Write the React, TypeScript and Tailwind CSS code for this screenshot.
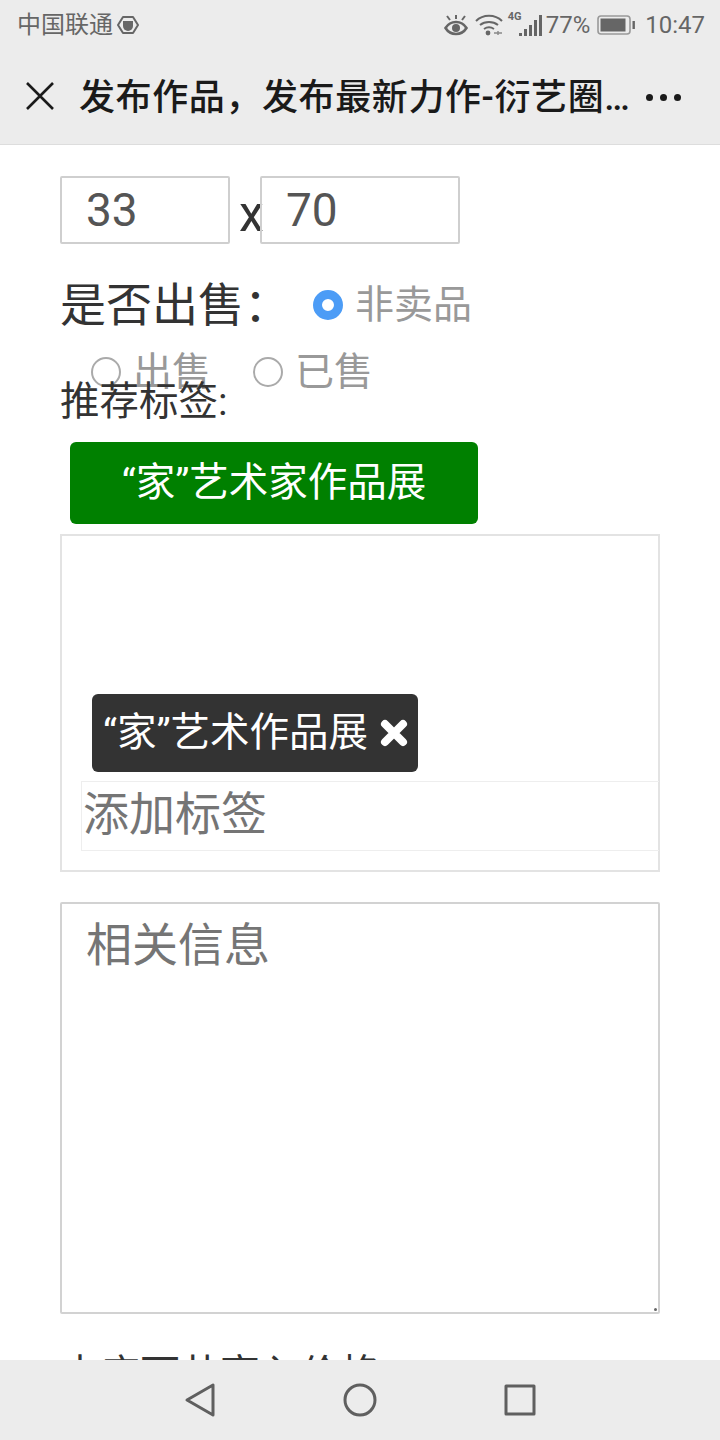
const cjk = 'font-["Roboto","Noto_Sans_CJK_SC",sans-serif]'

function StatusBar() {
  return (
    <div className="flex h-[50px] items-center justify-between pl-[17px] pr-[15px] text-[#666666]">
      <div className="flex items-center gap-[4px]">
        <span className="text-[24px] leading-[30px]">中国联通</span>
        <svg width="22" height="20" viewBox="0 0 22 20">
          <path d="M6 2h10l5 8-5 8H6l-5-8z" fill="none" stroke="#666" strokeWidth="2" strokeLinejoin="round" />
          <path d="M6 6h10v5a5 5 0 0 1-5 5 5 5 0 0 1-5-5z" fill="#666" />
        </svg>
      </div>
      <div className="flex items-center">
        <svg width="24" height="24" viewBox="0 0 24 24" fill="none" stroke="#666" strokeWidth="2.6">
          <path d="M1.5 15c2.500-4 6-6 10.500-6s8 2 10.500 6c-2.500 4-6 6-10.500 6s-8-2-10.500-6z" />
          <circle cx="12" cy="15" r="4" fill="#666" stroke="none" />
          <path d="M3 3l3 4M12 2v4M21 3l-3 4" strokeWidth="2" />
        </svg>
        <svg className="ml-[7px]" width="28" height="24" viewBox="0 0 28 24" fill="none" stroke="#666" strokeWidth="2">
          <path d="M1 8c7-7 19-7 26 0M5 12c5-4 13-4 18 0M9 16c3-2 7-2 10 0" />
          <circle cx="13" cy="20" r="2.400" fill="#666" stroke="none" />
          <path d="M19 20h8M23 18v4" strokeWidth="1.400" stroke="#888" />
        </svg>
        <div className="relative ml-[4px] h-[24px] w-[36px]">
          <span className="absolute left-[1px] top-[-2px] text-[11px] font-bold leading-[12px]">4G</span>
          <svg className="absolute right-0 top-0" width="24" height="24" viewBox="0 0 24 24" fill="#666">
            <rect x="0" y="20" width="3" height="3" />
            <rect x="5" y="16" width="3" height="7" />
            <rect x="10" y="12" width="3" height="11" />
            <rect x="15" y="7" width="3" height="16" />
            <rect x="20" y="2" width="3" height="21" />
          </svg>
        </div>
        <span className="ml-[3px] text-[24px] leading-[30px]">77%</span>
        <svg className="ml-[7px]" width="38" height="22" viewBox="0 0 38 22">
          <rect x="1" y="2" width="32" height="18" rx="3" fill="none" stroke="#999" strokeWidth="1.600" />
          <rect x="3.500" y="4.500" width="25" height="13" fill="#666" />
          <rect x="35.500" y="7" width="2.400" height="8" fill="#666" />
        </svg>
        <span className="ml-[10px] text-[24px] leading-[30px]">10:47</span>
      </div>
    </div>
  )
}

function TitleBar() {
  return (
    <div className="flex h-[95px] items-start border-b border-[#dddddd] pt-[23px] text-[#1a1a1a]">
      <svg className="ml-[25px] mt-[8px] shrink-0" width="30" height="30" viewBox="0 0 30 30" fill="none" stroke="#1a1a1a" strokeWidth="2.600">
        <path d="M2 2l26 26M28 2L2 28" />
      </svg>
      <div className="ml-[24px] w-[554px] truncate text-[36px] font-medium leading-[50px] tracking-[0.6px]">
        发布作品，发布最新力作-衍艺圈子发布作品
      </div>
      <div className="ml-[13px] mt-[21px] flex gap-[7px]">
        <span className="size-[7px] rounded-full bg-[#1a1a1a]" />
        <span className="size-[7px] rounded-full bg-[#1a1a1a]" />
        <span className="size-[7px] rounded-full bg-[#1a1a1a]" />
      </div>
    </div>
  )
}

function Radio({ label, checked }: { label: string; checked?: boolean }) {
  return (
    <div className="flex items-center gap-[12px]">
      <span
        className={
          checked
            ? 'size-[30px] rounded-full border-[9px] border-[#4c9cf6] bg-white'
            : 'size-[30px] rounded-full border-2 border-[#aaaaaa] bg-white'
        }
      />
      <span className="text-[39px] leading-[50px] text-[#999999]">{label}</span>
    </div>
  )
}

function SizeRow() {
  return (
    <div className="flex h-[68px] items-start">
      <div className="h-[68px] w-[170px] rounded-[2px] border-2 border-[#cfcfcf] pl-[24px] text-[46px] leading-[64px] text-[#555555]">
        33
      </div>
      <span className="ml-[9px] mt-[7px] w-[21px] text-[50px] leading-[62px] text-[#333333]">x</span>
      <div className="h-[68px] w-[200px] rounded-[2px] border-2 border-[#cfcfcf] pl-[24px] text-[46px] leading-[64px] text-[#555555]">
        70
      </div>
    </div>
  )
}

function TagBox() {
  return (
    <div className="flex h-[338px] w-[600px] flex-col items-start border-2 border-[#e3e3e3] pl-[19px]">
      <div className="ml-[11px] mt-[158px] flex h-[78px] w-[326px] items-center rounded-[6px] bg-[#333333] pl-[11px] text-white">
        <span className="whitespace-nowrap text-[39.5px] leading-[50px]">“家”艺术作品展</span>
        <svg className="ml-[12px] shrink-0" width="28" height="28" viewBox="0 0 28 28">
          <path d="M5 5l18 18M23 5L5 23" stroke="#fff" strokeWidth="8" strokeLinecap="round" />
        </svg>
      </div>
      <div className="mt-[9px] h-[70px] w-[578px] border border-r-0 border-[#eeeeee] pl-[1px] text-[46px] leading-[64px] text-[#757575]">
        添加标签
      </div>
    </div>
  )
}

function NavBar() {
  return (
    <div className="flex h-[80px] shrink-0 items-center justify-center gap-[120px] bg-[#ececec]">
      <svg width="60" height="40" viewBox="0 0 60 40" fill="none" stroke="#5f5f5f" strokeWidth="3" strokeLinejoin="round">
        <path d="M43 5v30L17 20z" />
      </svg>
      <svg className="mx-[-10px]" width="40" height="40" viewBox="0 0 40 40" fill="none" stroke="#5f5f5f" strokeWidth="3">
        <circle cx="20" cy="20" r="15" />
      </svg>
      <svg width="60" height="40" viewBox="0 0 60 40" fill="none" stroke="#5f5f5f" strokeWidth="3" strokeLinejoin="round">
        <rect x="16" y="6" width="28" height="28" />
      </svg>
    </div>
  )
}

export default function App() {
  return (
    <div className={`flex h-[1440px] w-[720px] flex-col overflow-hidden bg-white ${cjk}`}>
      <div className="shrink-0 bg-[#ececec]">
        <StatusBar />
        <TitleBar />
      </div>
      <div className="min-h-0 flex-1 overflow-hidden pl-[60px] pt-[31px]">
        <SizeRow />
        <div className="mt-[30px] flex h-[62px] items-center">
          <span className="w-[253px] text-[46px] leading-[62px] text-[#333333]">是否出售：</span>
          <Radio label="非卖品" checked />
        </div>
        <div className="mt-[11px] flex h-[50px] items-center gap-[42px] pl-[31px]">
          <Radio label="出售" />
          <Radio label="已售" />
        </div>
        <div className="mt-[-23px] text-[39.5px] leading-[56px] text-[#333333]">推荐标签:</div>
        <div className="ml-[10px] mt-[12px] flex h-[82px] w-[408px] items-center justify-center rounded-[6px] bg-[#008000] text-[39.5px] text-white">
          “家”艺术家作品展
        </div>
        <div className="mt-[10px]">
          <TagBox />
        </div>
        <div className="relative mt-[30px] h-[412px] w-[600px] rounded-[2px] border-2 border-[#d2d2d2] pl-[24px] pt-[9px] text-[46px] leading-[64px] text-[#757575]">
          相关信息
          <span className="absolute bottom-[1px] right-[1px] size-[3px] rounded-full bg-[#666666]" />
        </div>
        <div className="mt-[36px] text-[40px] leading-[50px] text-[#333333]">本店可共享入价格</div>
      </div>
      <NavBar />
    </div>
  )
}
